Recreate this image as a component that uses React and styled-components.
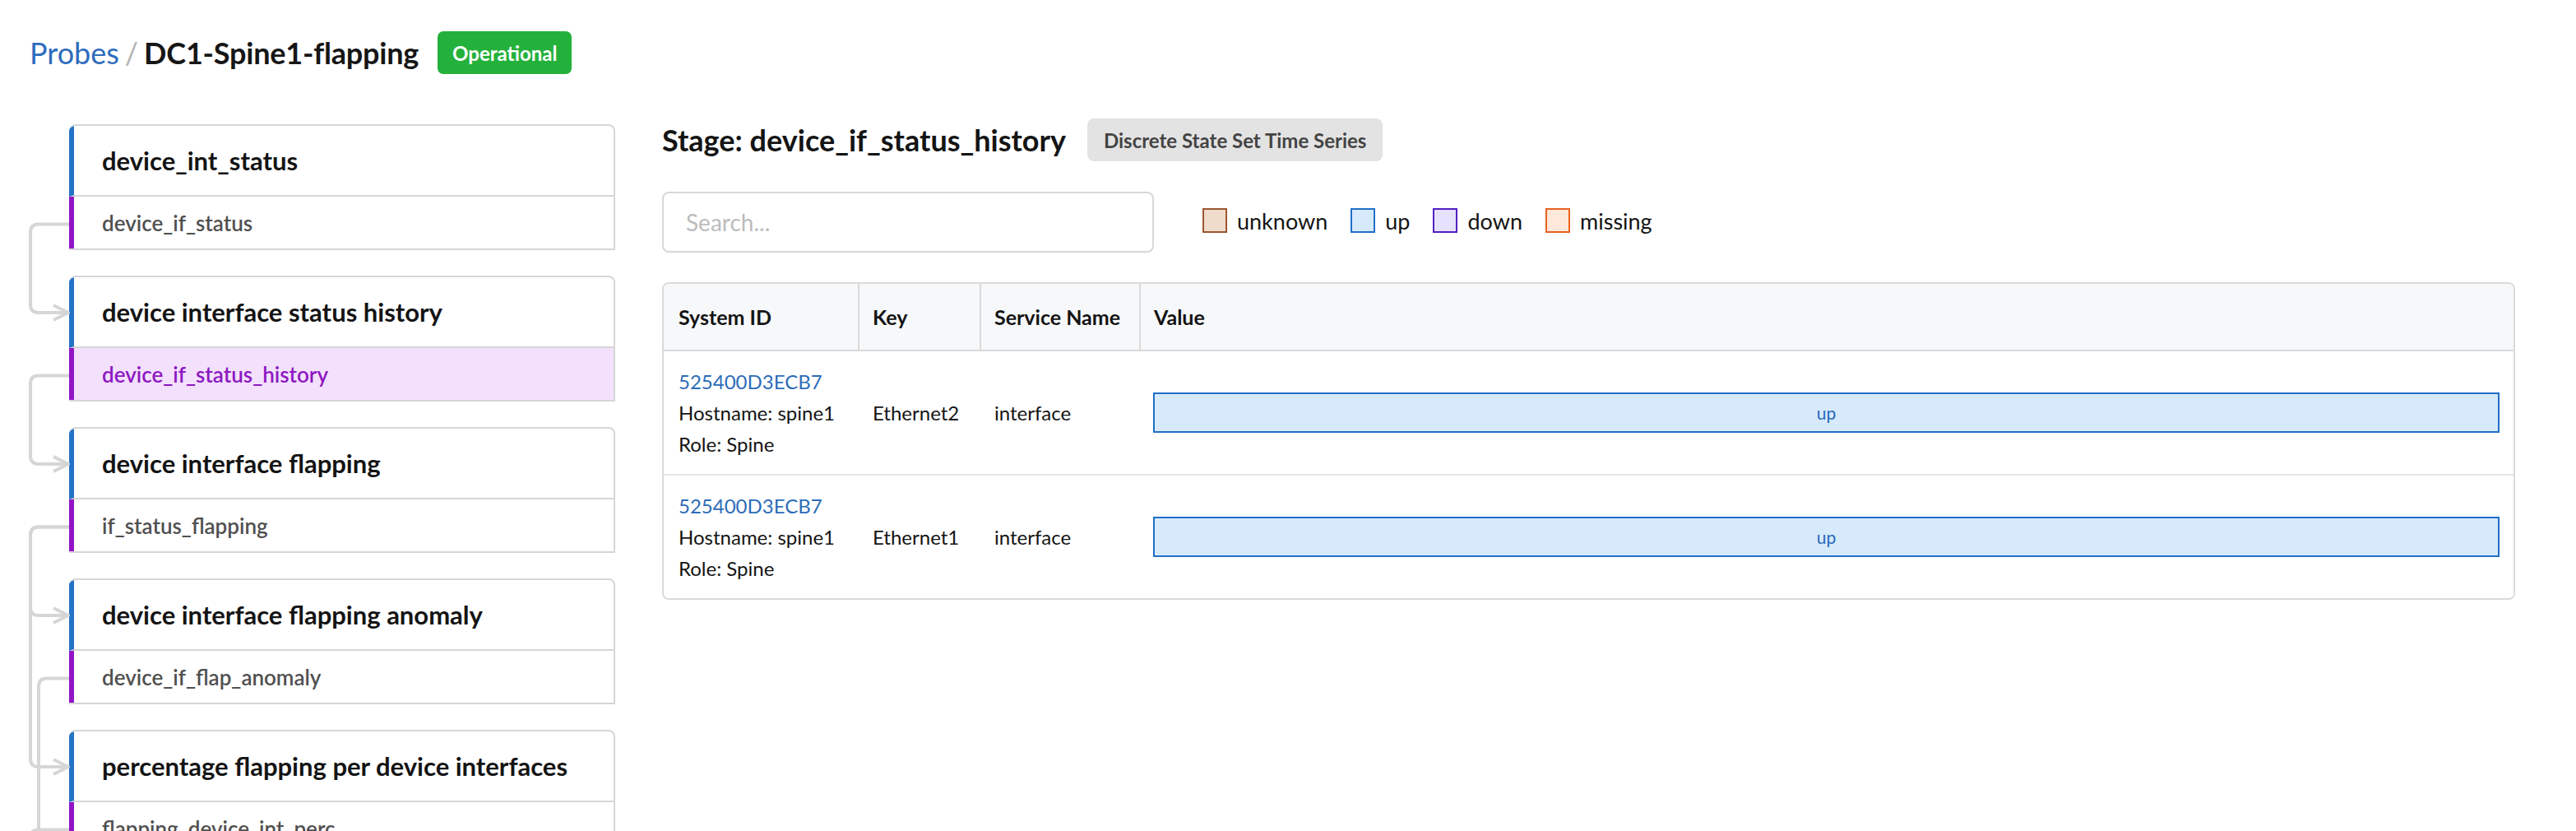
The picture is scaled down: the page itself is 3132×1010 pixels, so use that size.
import React from 'react';
import styled, { createGlobalStyle } from 'styled-components';

const GlobalStyle = createGlobalStyle`
  html, body { margin: 0; padding: 0; background: #fff; }
  body { font-family: Lato, "Open Sans", "Liberation Sans", sans-serif; color: #141414; }
  * { box-sizing: border-box; }
`;

const Page = styled.div`
  width: 3132px;
  padding: 38px 74px 0 30px;
`;

const TitleBar = styled.div`
  display: flex;
  align-items: center;
  height: 52px;
  padding-left: 6px;
  font-size: 36px;
`;

const CrumbLink = styled.a`
  color: #2e6cbd;
  text-decoration: none;
`;

const CrumbSep = styled.span`
  color: #b3b3b3;
  margin: 0 7px;
`;

const PageTitle = styled.span`
  font-weight: 700;
  color: #161616;
  letter-spacing: -0.2px;
`;

const StatusBadge = styled.span`
  margin-left: 23px;
  height: 52px;
  display: inline-flex;
  align-items: center;
  padding: 0 18px;
  border-radius: 7px;
  background: #24b13b;
  color: #fff;
  font-size: 24px;
  font-weight: 700;
`;

const Body = styled.div`
  display: flex;
  margin-top: 54px;
`;

const LeftColumn = styled.div`
  position: relative;
  flex: none;
  width: 718px;
  padding: 7px 0 0 54px;
  display: flex;
  flex-direction: column;
  gap: 31px;
`;

const Wires = styled.svg`
  position: absolute;
  left: 0;
  top: 0;
  overflow: visible;
  pointer-events: none;
`;

const Card = styled.div`
  border: 2px solid #d6d6d6;
  border-left: none;
  border-radius: 8px 8px 0 0;
  overflow: hidden;
  background: #fff;
`;

const StageHead = styled.div`
  height: 86px;
  display: flex;
  align-items: center;
  padding-left: 34px;
  border-left: 6px solid #2473c6;
  border-bottom: 2px solid #d6d6d6;
  font-size: 31px;
  font-weight: 700;
  color: #141414;
`;

const StageOutput = styled.div`
  height: 63px;
  display: flex;
  align-items: center;
  padding-left: 34px;
  border-left: 6px solid #9214c6;
  font-size: 26px;
  font-weight: 600;
  color: ${(p) => (p.$active ? '#8d18c2' : '#505050')};
  background: ${(p) => (p.$active ? '#f3e0fc' : '#fff')};
`;

const RightColumn = styled.div`
  flex: 1;
  margin-left: 57px;
  min-width: 0;
`;

const StageTitleRow = styled.div`
  display: flex;
  align-items: center;
  height: 52px;
  gap: 26px;
`;

const StageTitle = styled.h2`
  margin: 0;
  font-size: 36px;
  font-weight: 700;
  color: #141414;
`;

const TypeBadge = styled.span`
  height: 52px;
  display: inline-flex;
  align-items: center;
  padding: 0 20px;
  border-radius: 8px;
  background: #e3e3e3;
  color: #444;
  font-size: 24px;
  font-weight: 700;
`;

const Toolbar = styled.div`
  display: flex;
  align-items: center;
  margin-top: 37px;
  height: 74px;
`;

const SearchBox = styled.input`
  width: 598px;
  height: 74px;
  border: 2px solid #d8d8d8;
  border-radius: 8px;
  padding: 0 27px;
  font-family: inherit;
  font-size: 28px;
  color: #222;
  outline: none;
  &::placeholder { color: #bcbcbc; }
`;

const Legend = styled.div`
  display: flex;
  align-items: center;
  gap: 28px;
  margin-left: 59px;
  margin-top: -4px;
`;

const LegendItem = styled.div`
  display: flex;
  align-items: center;
  gap: 12px;
  font-size: 27px;
  color: #141414;
`;

const Swatch = styled.span`
  width: 30px;
  height: 30px;
  border: 2px solid ${(p) => p.$border};
  background: ${(p) => p.$fill};
`;

const Table = styled.div`
  margin-top: 36px;
  border: 2px solid #dadada;
  border-radius: 8px;
  overflow: hidden;
`;

const Row = styled.div`
  display: grid;
  grid-template-columns: 238px 148px 194px 1fr;
  min-height: ${(p) => (p.$head ? '82px' : '151px')};
  background: ${(p) => (p.$head ? '#f7f8fa' : '#fff')};
  border-bottom: 2px solid ${(p) => (p.$head ? '#dadada' : '#e4e4e4')};
  &:last-child { border-bottom: none; min-height: 149px; }
`;

const HeadCell = styled.div`
  display: flex;
  align-items: center;
  padding: 0 12px 0 ${(p) => (p.$first ? '18px' : '16px')};
  font-size: 25px;
  font-weight: 700;
  color: #141414;
  white-space: nowrap;
  border-right: ${(p) => (p.$last ? 'none' : '2px solid #dadada')};
`;

const Cell = styled.div`
  display: flex;
  flex-direction: column;
  justify-content: center;
  padding: 16px ${(p) => (p.$value ? '17px' : '8px')} 16px ${(p) => (p.$first ? '18px' : p.$value ? '15px' : '16px')};
  font-size: 24px;
  line-height: 38px;
  color: #141414;
  white-space: nowrap;
`;

const SystemLink = styled.a`
  color: #2d6cb8;
  text-decoration: none;
`;

const ValueBar = styled.div`
  height: 49px;
  display: flex;
  align-items: center;
  justify-content: center;
  border: 2px solid #1f6fc6;
  background: #d7eafc;
  color: #2868b9;
  font-size: 21px;
`;

const stages = [
  { name: 'device_int_status', out: 'device_if_status' },
  { name: 'device interface status history', out: 'device_if_status_history', active: true },
  { name: 'device interface flapping', out: 'if_status_flapping' },
  { name: 'device interface flapping anomaly', out: 'device_if_flap_anomaly' },
  { name: 'percentage flapping per device interfaces', out: 'flapping_device_int_perc' },
];

const legend = [
  { label: 'unknown', fill: '#f0dccb', border: '#9b5631' },
  { label: 'up', fill: '#d7eafc', border: '#1f6fc6' },
  { label: 'down', fill: '#e6e1fc', border: '#5320c2' },
  { label: 'missing', fill: '#fde8da', border: '#e8611e' },
];

const rows = [
  { id: '525400D3ECB7', host: 'spine1', role: 'Spine', key: 'Ethernet2', service: 'interface', value: 'up' },
  { id: '525400D3ECB7', host: 'spine1', role: 'Spine', key: 'Ethernet1', service: 'interface', value: 'up' },
];

const CARD_TOP = 7;
const CARD_STEP = 184;
const headY = (i) => CARD_TOP + i * CARD_STEP + 45;
const outY = (i) => CARD_TOP + i * CARD_STEP + 121.5;

const wire = (fromY, toY, x) =>
  `M54 ${fromY} H${x + 10} Q${x} ${fromY} ${x} ${fromY + 10} V${toY - 10} Q${x} ${toY} ${x + 10} ${toY} H52`;
const arrow = (y) => `M35 ${y - 9} L53 ${y} L35 ${y + 9}`;
const drop = (fromY, x) => `M54 ${fromY} H${x + 10} Q${x} ${fromY} ${x} ${fromY + 10} V1100`;

function Connectors() {
  const paths = [
    wire(outY(0), headY(1), 7),
    arrow(headY(1)),
    wire(outY(1), headY(2), 7),
    arrow(headY(2)),
    wire(outY(2), headY(3), 7),
    arrow(headY(3)),
    wire(outY(2), headY(4), 7),
    arrow(headY(4)),
    drop(outY(3), 17),
    drop(outY(4), 7),
  ];
  return (
    <Wires width="54" height="1100" viewBox="0 0 54 1100">
      {paths.map((d, i) => (
        <path key={i} d={d} fill="none" stroke="#d6d6d6" strokeWidth="4" strokeLinejoin="round" />
      ))}
    </Wires>
  );
}

export default function App() {
  return (
    <>
      <GlobalStyle />
      <Page>
        <TitleBar>
          <CrumbLink href="#">Probes</CrumbLink>
          <CrumbSep>/</CrumbSep>
          <PageTitle>DC1-Spine1-flapping</PageTitle>
          <StatusBadge>Operational</StatusBadge>
        </TitleBar>
        <Body>
          <LeftColumn>
            <Connectors />
            {stages.map((s) => (
              <Card key={s.out}>
                <StageHead>{s.name}</StageHead>
                <StageOutput $active={s.active}>{s.out}</StageOutput>
              </Card>
            ))}
          </LeftColumn>
          <RightColumn>
            <StageTitleRow>
              <StageTitle>Stage: device_if_status_history</StageTitle>
              <TypeBadge>Discrete State Set Time Series</TypeBadge>
            </StageTitleRow>
            <Toolbar>
              <SearchBox placeholder="Search..." />
              <Legend>
                {legend.map((l) => (
                  <LegendItem key={l.label}>
                    <Swatch $fill={l.fill} $border={l.border} />
                    {l.label}
                  </LegendItem>
                ))}
              </Legend>
            </Toolbar>
            <Table>
              <Row $head>
                <HeadCell $first>System ID</HeadCell>
                <HeadCell>Key</HeadCell>
                <HeadCell>Service Name</HeadCell>
                <HeadCell $last>Value</HeadCell>
              </Row>
              {rows.map((r, i) => (
                <Row key={i}>
                  <Cell $first>
                    <SystemLink href="#">{r.id}</SystemLink>
                    <span>Hostname: {r.host}</span>
                    <span>Role: {r.role}</span>
                  </Cell>
                  <Cell>{r.key}</Cell>
                  <Cell>{r.service}</Cell>
                  <Cell $value>
                    <ValueBar>{r.value}</ValueBar>
                  </Cell>
                </Row>
              ))}
            </Table>
          </RightColumn>
        </Body>
      </Page>
    </>
  );
}
